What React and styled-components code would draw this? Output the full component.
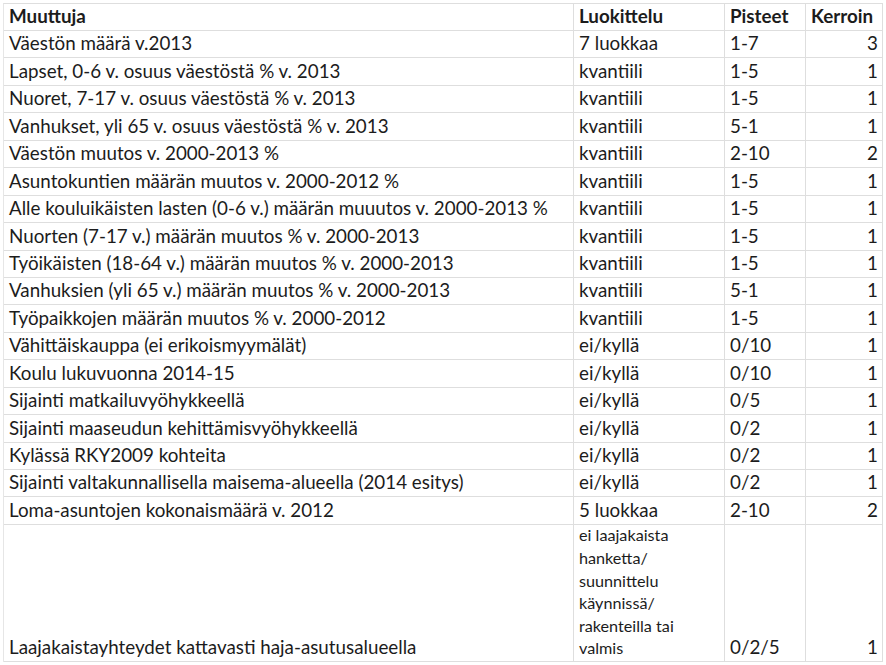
import React from "react";
import styled, { createGlobalStyle } from "styled-components";

const rows = [
  ["Väestön määrä v.2013", "7 luokkaa", "1-7", 3],
  ["Lapset, 0-6 v. osuus väestöstä % v. 2013", "kvantiili", "1-5", 1],
  ["Nuoret, 7-17 v. osuus väestöstä % v. 2013", "kvantiili", "1-5", 1],
  ["Vanhukset, yli 65 v. osuus väestöstä % v. 2013", "kvantiili", "5-1", 1],
  ["Väestön muutos v. 2000-2013 %", "kvantiili", "2-10", 2],
  ["Asuntokuntien määrän muutos v. 2000-2012 %", "kvantiili", "1-5", 1],
  ["Alle kouluikäisten lasten (0-6 v.) määrän muuutos v. 2000-2013 %", "kvantiili", "1-5", 1],
  ["Nuorten (7-17 v.) määrän muutos % v. 2000-2013", "kvantiili", "1-5", 1],
  ["Työikäisten (18-64 v.) määrän muutos % v. 2000-2013", "kvantiili", "1-5", 1],
  ["Vanhuksien (yli 65 v.) määrän muutos % v. 2000-2013", "kvantiili", "5-1", 1],
  ["Työpaikkojen määrän muutos % v. 2000-2012", "kvantiili", "1-5", 1],
  ["Vähittäiskauppa (ei erikoismyymälät)", "ei/kyllä", "0/10", 1],
  ["Koulu lukuvuonna 2014-15", "ei/kyllä", "0/10", 1],
  ["Sijainti matkailuvyöhykkeellä", "ei/kyllä", "0/5", 1],
  ["Sijainti maaseudun kehittämisvyöhykkeellä", "ei/kyllä", "0/2", 1],
  ["Kylässä RKY2009 kohteita", "ei/kyllä", "0/2", 1],
  ["Sijainti valtakunnallisella maisema-alueella (2014 esitys)", "ei/kyllä", "0/2", 1],
  ["Loma-asuntojen kokonaismäärä v. 2012", "5 luokkaa", "2-10", 2],
];

const GlobalStyle = createGlobalStyle`
  body {
    margin: 0;
    background: #fff;
    font-family: Lato, "Open Sans", sans-serif;
    color: #1c1c1c;
  }
`;

const Sheet = styled.div`
  padding: 3px 0 0 3px;
`;

const Table = styled.div`
  width: 879px;
  border-top: 1px solid #dedede;
  border-left: 1px solid #e6e6e6;
`;

const Row = styled.div`
  display: grid;
  grid-template-columns: 570px 151px 81px 77px;
  height: ${(p) => p.$h}px;
`;

const Cell = styled.div`
  display: flex;
  align-items: flex-end;
  justify-content: ${(p) => (p.$right ? "flex-end" : "flex-start")};
  padding: 0 ${(p) => (p.$right ? "4px" : "0")} 2px ${(p) => (p.$right ? "0" : "5px")};
  border-right: 1px solid #dedede;
  border-bottom: 1px solid #dedede;
  font-size: 18.8px;
  line-height: 24px;
  font-weight: ${(p) => (p.$bold ? 700 : 400)};
  white-space: nowrap;
  overflow: hidden;
  box-sizing: border-box;
`;

const Wrapped = styled.div`
  font-size: 16.2px;
  line-height: 22.6px;
  white-space: normal;
  margin-bottom: -1px;
`;

const App = () => (
  <>
    <GlobalStyle />
    <Sheet>
      <Table>
        <Row $h={27}>
          <Cell $bold>Muuttuja</Cell>
          <Cell $bold>Luokittelu</Cell>
          <Cell $bold>Pisteet</Cell>
          <Cell $bold>Kerroin</Cell>
        </Row>
        {rows.map(([name, cls, pts, k]) => (
          <Row key={name} $h={27.45}>
            <Cell>{name}</Cell>
            <Cell>{cls}</Cell>
            <Cell>{pts}</Cell>
            <Cell $right>{k}</Cell>
          </Row>
        ))}
        <Row $h={137}>
          <Cell>Laajakaistayhteydet kattavasti haja-asutusalueella</Cell>
          <Cell>
            <Wrapped>
              ei laajakaista
              <br />
              hanketta/
              <br />
              suunnittelu
              <br />
              käynnissä/
              <br />
              rakenteilla tai
              <br />
              valmis
            </Wrapped>
          </Cell>
          <Cell>0/2/5</Cell>
          <Cell $right>1</Cell>
        </Row>
      </Table>
    </Sheet>
  </>
);

export default App;
